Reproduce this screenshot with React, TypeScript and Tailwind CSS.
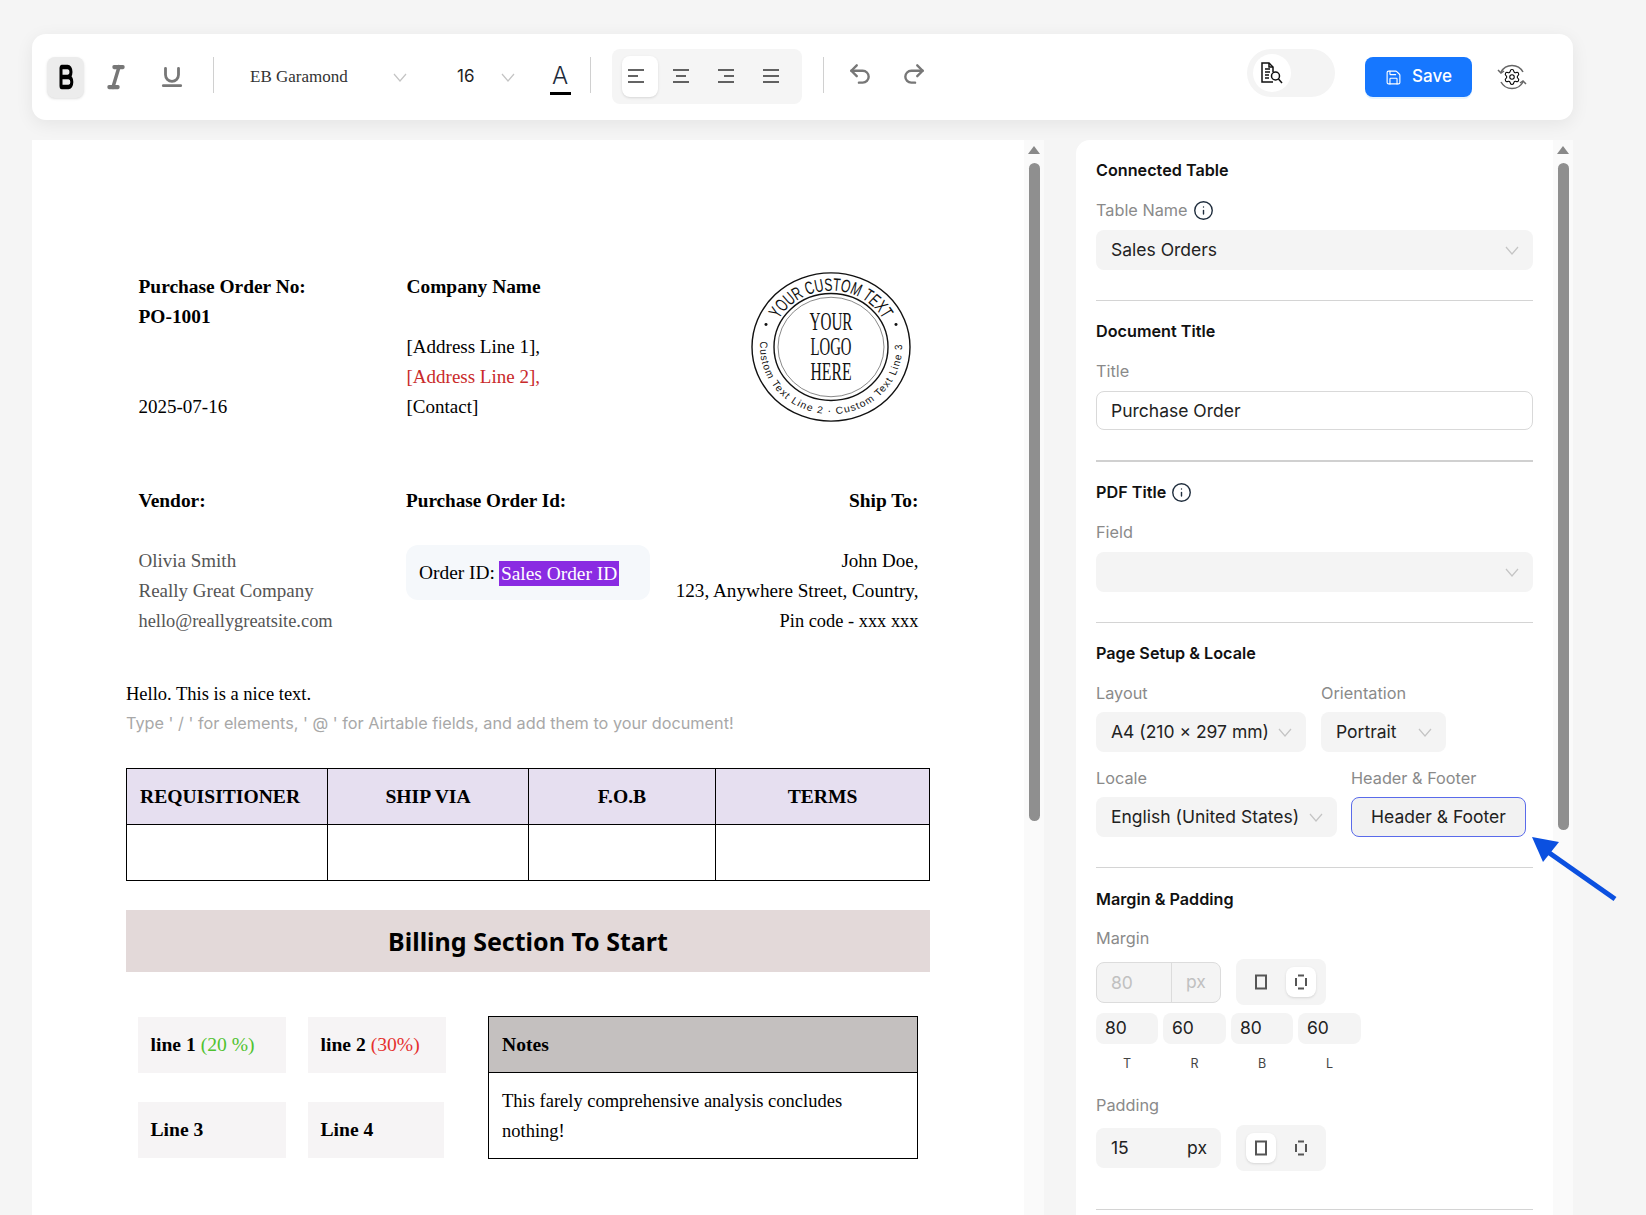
import * as React from "react";
import { Info, Save, Undo2, Redo2, Settings, Bold, Italic, Underline } from "lucide-react";

const serif = "font-['Liberation_Serif',serif]";

function Chevron({ className = "" }: { className?: string }) {
    return (
        <svg width="14" height="9" viewBox="0 0 14 9" fill="none" stroke="#c4c4c4" strokeWidth="1.2" className={className}>
            <path d="M1 1l6 7 6-7" />
        </svg>
    );
}

function AlignIcon({ rows }: { rows: number[][] }) {
    return (
        <svg width="18" height="14" viewBox="0 0 18 14" stroke="#222" strokeWidth="1.4">
            {rows.map((r, i) => <line key={i} x1={r[0]} x2={r[1]} y1={1 + i * 6} y2={1 + i * 6} />)}
        </svg>
    );
}

function Stamp() {
    return (
        <svg width="162" height="152" viewBox="0 0 162 162" preserveAspectRatio="none" fill="none" className="-my-px">
            <circle cx="81" cy="81" r="79" stroke="#111" strokeWidth="1.4" />
            <circle cx="81" cy="81" r="57" stroke="#111" strokeWidth="1.4" />
            <circle cx="81" cy="81" r="53" stroke="#333" strokeWidth="0.6" />
            <path id="stamp-top" d="M21 81A60 60 0 0 1 141 81" />
            <path id="stamp-bottom" d="M10.3 74.9A71 71 0 1 0 151.7 74.9" />
            <text fontFamily="'Liberation Sans',sans-serif" fontSize="19" fill="#111">
                <textPath href="#stamp-top" startOffset="50%" textAnchor="middle" textLength="126" lengthAdjust="spacingAndGlyphs">YOUR CUSTOM TEXT</textPath>
            </text>
            <text fontFamily="'Liberation Sans',sans-serif" fontSize="10.5" fill="#111">
                <textPath href="#stamp-bottom" textLength="232" lengthAdjust="spacing">Custom Text Line 2 · Custom Text Line 3</textPath>
            </text>
            <circle cx="16" cy="57" r="1.5" fill="#111" />
            <circle cx="146" cy="57" r="1.5" fill="#111" />
            <g fontFamily="'Liberation Serif',serif" fontSize="26" fill="#111" textAnchor="middle">
                <text x="81" y="63" textLength="43" lengthAdjust="spacingAndGlyphs">YOUR</text>
                <text x="81" y="90" textLength="41" lengthAdjust="spacingAndGlyphs">LOGO</text>
                <text x="81" y="116" textLength="41" lengthAdjust="spacingAndGlyphs">HERE</text>
            </g>
        </svg>
    );
}

function Toolbar() {
    return (
        <div className="flex h-[86px] w-[1541px] items-center rounded-[14px] bg-white pl-[15px] shadow-[0_4px_18px_rgba(0,0,0,0.07)]">
            <div className="flex h-[41px] w-[37px] items-center justify-center rounded-lg bg-[#ececec] shadow-sm">
                <Bold width={20} height={30} preserveAspectRatio="none" strokeWidth={3.6} color="#000" />
            </div>
            <div className="ml-[19px] flex w-[26px] justify-center">
                <Italic width={24} height={30} preserveAspectRatio="none" strokeWidth={3.4} color="#777" />
            </div>
            <div className="ml-[30px] flex w-[26px] justify-center">
                <Underline size={28} strokeWidth={2.6} color="#777" />
            </div>
            <div className="ml-[28px] -mt-[4px] h-[36px] w-px bg-[#d0d0d0]" />
            <span className={`ml-[36px] w-[143px] text-[17px] text-[#333] ${serif}`}>EB Garamond</span>
            <Chevron />
            <span className="ml-[50px] w-[44px] font-['Inter',sans-serif] text-[17px] text-[#222]">16</span>
            <Chevron />
            <div className="ml-[34px] flex h-[46px] w-[22px] flex-col items-center justify-end pb-[5px]">
                <span className="font-['Inter',sans-serif] text-[24px] leading-[30px] font-light text-[#1d2b3a]">A</span>
                <div className="mt-[1px] h-[3px] w-[21px] bg-black" />
            </div>
            <div className="ml-[19px] -mt-[4px] h-[36px] w-px bg-[#d0d0d0]" />
            <div className="ml-[21px] -mt-[2px] flex h-[55px] w-[190px] items-center rounded-lg bg-[#f5f5f5] pl-[10px]">
                <div className="flex h-[41px] w-[36px] items-center justify-center rounded-lg bg-white pr-[8px] shadow-sm">
                    <AlignIcon rows={[[1, 17], [1, 11], [1, 17]]} />
                </div>
                <div className="ml-[9px] flex w-[36px] justify-center pr-[8px]"><AlignIcon rows={[[1, 17], [4, 14], [1, 17]]} /></div>
                <div className="ml-[9px] flex w-[36px] justify-center pr-[8px]"><AlignIcon rows={[[1, 17], [7, 17], [1, 17]]} /></div>
                <div className="ml-[9px] flex w-[36px] justify-center pr-[8px]"><AlignIcon rows={[[1, 17], [1, 17], [1, 17]]} /></div>
            </div>
            <div className="ml-[21px] -mt-[4px] h-[36px] w-px bg-[#d0d0d0]" />
            <div className="ml-[23px] -mt-[6px] flex w-[26px] justify-center"><Undo2 size={28} strokeWidth={2.2} color="#777" /></div>
            <div className="ml-[28px] -mt-[6px] flex w-[26px] justify-center"><Redo2 size={28} strokeWidth={2.2} color="#777" /></div>
            <div className="ml-[320px] -mt-[8px] flex h-[48px] w-[88px] items-center rounded-full bg-[#f4f4f4] pl-[6px]">
                <div className="flex h-[38px] w-[38px] items-center justify-center rounded-full bg-white">
                    <svg width="24" height="24" viewBox="0 0 24 24" fill="none" stroke="#111" strokeWidth="1.5">
                        <path d="M13 11V6l-4-4H2v19h11" />
                        <path d="M9 2v4h4" />
                        <path d="M5 8h5M5 11h5M5 14h4M5 17h4" />
                        <circle cx="15.5" cy="15" r="4" fill="#fff" />
                        <path d="M18.5 18l3.5 4" />
                    </svg>
                </div>
            </div>
            <div className="ml-[30px] flex h-[40px] w-[107px] items-center justify-center gap-[10px] rounded-lg bg-[#1677ff] text-white shadow-[0_2px_0_#e6f4ff]">
                <Save size={17} strokeWidth={1.6} />
                <span className="font-['Inter',sans-serif] text-[17px] font-medium">Save</span>
            </div>
            <div className="ml-[25px]">
                <svg width="30" height="30" viewBox="0 0 30 30" fill="none" stroke="#666" strokeWidth="1.5">
                    <path d="M4 10A12.5 12.5 0 0 1 26 10" />
                    <path d="M26 20A12.5 12.5 0 0 1 4 20" />
                    <path d="M1 8l3 3 3-2M29 22l-3-3-3 2" />
                    <Settings x={6} y={6} width={18} height={18} strokeWidth={1.4} />
                </svg>
            </div>
        </div>
    );
}

function Scroll({ h }: { h: string }) {
    return (
        <div className="flex w-[20px] shrink-0 flex-col items-center bg-[#fafafa]">
            <svg width="12" height="8" viewBox="0 0 12 8" className="mt-[6px]"><path d="M6 0l6 8H0z" fill="#888" /></svg>
            <div className={`mt-[9px] w-[11px] rounded-full bg-[#8f8f8f] ${h}`} />
        </div>
    );
}

function Doc() {
    return (
        <div className="flex h-[1075px] w-[1012px] bg-white">
            <div className={`flex-1 pt-[132px] pl-[94px] text-[19px] leading-[30px] text-black ${serif}`}>
                <div className="ml-[12.5px] flex w-[780px]">
                    <div className="w-[268px]">
                        <div className="text-[19.4px] font-bold">Purchase Order No:</div>
                        <div className="text-[19.4px] font-bold">PO-1001</div>
                        <div className="h-[60px]" />
                        <div>2025-07-16</div>
                    </div>
                    <div className="flex-1">
                        <div className="text-[19.4px] font-bold">Company Name</div>
                        <div className="h-[30px]" />
                        <div>[Address Line 1],</div>
                        <div className="text-[#c92a2a]">[Address Line 2],</div>
                        <div>[Contact]</div>
                    </div>
                    <div className="mr-[6.5px]"><Stamp /></div>
                </div>
                <div className="mt-[64px] ml-[12.5px] flex w-[780px]">
                    <div className="w-[267.5px]">
                        <div className="text-[19.4px] font-bold">Vendor:</div>
                        <div className="h-[30px]" />
                        <div className="text-[#555]">Olivia Smith</div>
                        <div className="text-[#555]">Really Great Company</div>
                        <div className="text-[18.4px] text-[#555]">hello@reallygreatsite.com</div>
                    </div>
                    <div className="w-[244px]">
                        <div className="text-[19.2px] font-bold">Purchase Order Id:</div>
                        <div className="mt-[29px] flex h-[55px] items-center rounded-xl bg-[#f5f8fb] pt-[1px] pl-[13px] text-[19.4px]">
                            Order ID:
                            <span className="ml-[4px] bg-[#8a2be2] px-[2px] leading-[25px] text-white">Sales Order ID</span>
                        </div>
                    </div>
                    <div className="flex-1 text-right">
                        <div className="text-[19.4px] font-bold">Ship To:</div>
                        <div className="h-[30px]" />
                        <div>John Doe,</div>
                        <div className="whitespace-nowrap text-[19.2px]">123, Anywhere Street, Country,</div>
                        <div className="text-[18.4px]">Pin code - xxx xxx</div>
                    </div>
                </div>
                <div className="mt-[43px] text-[18.5px]">Hello. This is a nice text.</div>
                <div className="-mt-px font-['Inter',sans-serif] text-[16.25px] text-[#a8a8a8]">Type ' / ' for elements, ' @ ' for Airtable fields, and add them to your document!</div>
                <table className="mt-[30px] w-[804px] table-fixed border-collapse text-[19.6px]">
                    <tbody>
                        <tr className="h-[56px] bg-[#e6dff0] font-bold">
                            <td className="w-[201px] border border-black pl-[13px]">REQUISITIONER</td>
                            <td className="w-[201px] border border-black text-center">SHIP VIA</td>
                            <td className="w-[187px] border border-black text-center">F.O.B</td>
                            <td className="border border-black text-center">TERMS</td>
                        </tr>
                        <tr className="h-[56px]">
                            <td className="border border-black" />
                            <td className="border border-black" />
                            <td className="border border-black" />
                            <td className="border border-black" />
                        </tr>
                    </tbody>
                </table>
                <div className="mt-[29px] flex h-[62px] w-[804px] items-center justify-center bg-[#e3d9d9] font-['Noto_Sans',sans-serif] text-[25px] font-bold">
                    Billing Section To Start
                </div>
                <div className="mt-[44px] flex text-[19.6px]">
                    <div className="ml-[11.5px] w-[350.5px] pt-px font-bold">
                        <div className="flex gap-[22px]">
                            <div className="flex h-[56px] w-[148px] items-center bg-[#f6f4f5] pl-[13px]">
                                line 1<span className="ml-[5px] font-normal text-[#4fc22f]">(20 %)</span>
                            </div>
                            <div className="flex h-[56px] w-[138px] items-center bg-[#f6f4f5] pl-[13px]">
                                line 2<span className="ml-[5px] font-normal text-[#e5302e]">(30%)</span>
                            </div>
                        </div>
                        <div className="mt-[29px] flex gap-[22px]">
                            <div className="flex h-[56px] w-[148px] items-center bg-[#f6f4f5] pl-[13px]">Line 3</div>
                            <div className="flex h-[56px] w-[136px] items-center bg-[#f6f4f5] pl-[13px]">Line 4</div>
                        </div>
                    </div>
                    <div className="h-[143px] w-[430px] border border-black">
                        <div className="flex h-[56px] items-center border-b border-black bg-[#c4c0bf] pl-[13px] font-bold">Notes</div>
                        <div className="px-[13px] pt-[13px] text-[18.5px]">This farely comprehensive analysis concludes nothing!</div>
                    </div>
                </div>
            </div>
            <Scroll h="h-[658px]" />
        </div>
    );
}

function Heading({ children }: { children: React.ReactNode }) {
    return <div className="flex h-[24px] items-center gap-[5px] text-[16.2px] font-semibold text-[#111]">{children}</div>;
}

function Label({ children, className = "" }: { children: React.ReactNode; className?: string }) {
    return <div className={`flex h-[24px] items-center gap-[5px] text-[16.3px] text-[#8a8a8a] ${className}`}>{children}</div>;
}

function Select({ value, className = "" }: { value?: string; className?: string }) {
    return (
        <div className={`flex h-[40px] items-center justify-between rounded-lg bg-[#f4f4f4] pt-px pr-[14px] pl-[15px] text-[17.5px] text-[#222] ${className}`}>
            <span className="whitespace-nowrap">{value}</span>
            <Chevron />
        </div>
    );
}

function ModeToggle({ active }: { active: 0 | 1 }) {
    const btn = "flex h-[30px] w-[30px] items-center justify-center rounded-lg";
    return (
        <div className="flex h-[46px] w-[90px] items-center gap-[10px] rounded-lg bg-[#f4f4f4] pl-[10px]">
            <div className={`${btn} ${active === 0 ? "bg-white shadow-sm" : ""}`}>
                <svg width="14" height="16" viewBox="0 0 14 16" fill="none" stroke="#555" strokeWidth="2"><rect x="2" y="1.5" width="10" height="13" /></svg>
            </div>
            <div className={`${btn} ${active === 1 ? "bg-white shadow-sm" : ""}`}>
                <svg width="14" height="16" viewBox="0 0 14 16" fill="none" stroke="#555" strokeWidth="2">
                    <path d="M4 1.5h6M4 14.5h6M2 4v8M12 4v8" />
                </svg>
            </div>
        </div>
    );
}

function Side() {
    const sides = [["80", "T", "w-[62px]"], ["60", "R", "w-[63px]"], ["80", "B", "w-[62px]"], ["60", "L", "w-[63px]"]];
    return (
        <div className="flex h-[1075px] w-[497px] justify-between overflow-hidden rounded-tl-[14px] bg-white pl-[20px] font-['Inter',sans-serif]">
            <div className="w-[437px] pt-[18px]">
                <Heading>Connected Table</Heading>
                <Label className="mt-[16px]">Table Name <Info size={21} strokeWidth={1.6} color="#1f2d3d" /></Label>
                <Select value="Sales Orders" className="mt-[8px]" />
                <div className="mt-[30px] border-t border-[#d4d4d4]" />
                <div className="h-[18px]" />
                <Heading>Document Title</Heading>
                <Label className="mt-[16px]">Title</Label>
                <div className="mt-[8px] flex h-[39px] items-center rounded-lg border border-[#d9d9d9] pt-px pl-[14px] text-[17.5px] text-[#222]">Purchase Order</div>
                <div className="mt-[30px] border-t-2 border-[#d0d0d0]" />
                <div className="h-[18px]" />
                <Heading>PDF Title <Info size={21} strokeWidth={1.6} color="#1f2d3d" /></Heading>
                <Label className="mt-[16px]">Field</Label>
                <Select className="mt-[8px]" />
                <div className="mt-[30px] border-t border-[#d4d4d4]" />
                <div className="h-[18px]" />
                <Heading>Page Setup &amp; Locale</Heading>
                <div className="mt-[16px] flex gap-[15px]">
                    <div>
                        <Label>Layout</Label>
                        <Select value="A4 (210 × 297 mm)" className="mt-[7px] w-[210px]" />
                    </div>
                    <div>
                        <Label>Orientation</Label>
                        <Select value="Portrait" className="mt-[7px] w-[125px]" />
                    </div>
                </div>
                <div className="mt-[14px] flex gap-[14px]">
                    <div>
                        <Label>Locale</Label>
                        <Select value="English (United States)" className="mt-[7px] w-[241px]" />
                    </div>
                    <div>
                        <Label>Header &amp; Footer</Label>
                        <div className="mt-[7px] flex h-[40px] w-[175px] items-center justify-center rounded-lg border border-[#5a6bea] bg-[#f2f2f2] pt-px text-[17.5px] text-[#222]">Header &amp; Footer</div>
                    </div>
                </div>
                <div className="mt-[30px] border-t border-[#d4d4d4]" />
                <div className="h-[19px]" />
                <Heading>Margin &amp; Padding</Heading>
                <Label className="mt-[15px]">Margin</Label>
                <div className="mt-[9px] flex items-center gap-[15px]">
                    <div className="flex h-[41px] w-[125px] items-center rounded-lg border border-[#dcdcdc] bg-[#f4f4f4] text-[17.5px] text-[#c0c0c0]">
                        <span className="w-[75px] border-r border-[#dcdcdc] pl-[14px] leading-[39px]">80</span>
                        <span className="flex-1 text-center">px</span>
                    </div>
                    <ModeToggle active={1} />
                </div>
                <div className="mt-[8px] flex gap-[5px]">
                    {sides.map(s => (
                        <div key={s[1]} className={s[2]}>
                            <div className="flex h-[31px] items-center rounded-lg bg-[#f4f4f4] pl-[9px] text-[17.5px] text-[#222]">{s[0]}</div>
                            <div className="mt-[11px] text-center text-[12.5px] text-[#444]">{s[1]}</div>
                        </div>
                    ))}
                </div>
                <Label className="mt-[19px]">Padding</Label>
                <div className="mt-[8px] flex items-center gap-[15px]">
                    <div className="flex h-[40px] w-[125px] items-center justify-between rounded-lg bg-[#f4f4f4] pr-[14px] pl-[15px] text-[17.5px] text-[#222]">
                        <span>15</span><span>px</span>
                    </div>
                    <ModeToggle active={0} />
                </div>
                <div className="mt-[38px] border-t border-[#d4d4d4]" />
            </div>
            <Scroll h="h-[667px]" />
        </div>
    );
}

export default function App() {
    return (
        <div className="relative h-[1215px] w-[1646px] overflow-hidden bg-[#f5f5f5] pt-[34px] pl-[32px]">
            <Toolbar />
            <div className="mt-[20px] flex gap-[32px]">
                <Doc />
                <Side />
            </div>
            {/* annotation arrow on top of the screenshot */}
            <svg width="90" height="75" viewBox="0 0 90 75" className="absolute top-[832px] left-[1530px]">
                <path d="M2 5l27 5-16 20z" fill="#0b50e0" />
                <path d="M18 20l67 47" stroke="#0b50e0" strokeWidth="5" />
            </svg>
        </div>
    );
}
